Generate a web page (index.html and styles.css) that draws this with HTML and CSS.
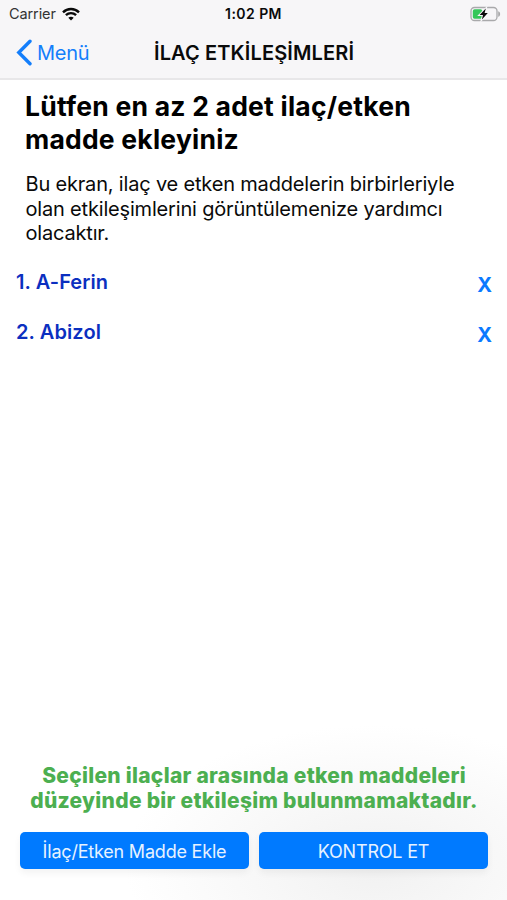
FILE: index.html
```html
<!DOCTYPE html>
<html lang="tr">
<head>
  <meta charset="UTF-8" />
  <meta name="viewport" content="width=device-width, initial-scale=1.0"/>
  <title>İlaç Etkileşimleri</title>
  <link rel="stylesheet" href="styles.css">
</head>
<body>

<div class="screen">
  <header class="top">
    <div class="status-bar">
      <div class="carrier">
        <span>Carrier</span>
        <svg class="wifi" width="18" height="14" viewBox="0 0 18 14" fill="none" stroke="#0a0a0a" stroke-width="2.4">
          <path d="M1 5.3C5.5 .9 12.5 .9 17 5.3"/>
          <path d="M3.9 8.2C6.8 5.4 11.2 5.4 14.1 8.2"/>
          <path d="M9 13.4L6.3 10.7C7.8 9.3 10.2 9.3 11.7 10.7Z" fill="#0a0a0a" stroke="none"/>
        </svg>
      </div>
      <div class="time">1:02 PM</div>
      <svg class="battery" width="31" height="16" viewBox="0 0 31 16">
        <rect x="1" y="1.5" width="26" height="13" rx="3.5" fill="none" stroke="#a9a9ab" stroke-width="1.3"/>
        <path d="M28.2 5.2C30.8 6 30.8 10 28.2 10.8Z" fill="#a9a9ab"/>
        <rect x="2.8" y="3.3" width="9.5" height="9.4" rx="1.8" fill="#35c759"/>
        <path d="M15.8 2.6L9.6 8.9H13L11.9 13.4L17.8 7.1H14.6Z" fill="#0a0a0a" stroke="#f7f6f8" stroke-width="2" paint-order="stroke"/>
      </svg>
    </div>
    <nav class="nav-bar">
      <a class="back">
        <svg width="16" height="27" viewBox="0 0 16 27" fill="none" stroke="#147efb" stroke-width="3.4" stroke-linecap="round">
          <path d="M14 2.2L2.8 13.5L14 24.8"/>
        </svg>
        <span>Menü</span>
      </a>
      <h1>İLAÇ ETKİLEŞİMLERİ</h1>
    </nav>
  </header>

  <main class="content">
    <h2>Lütfen en az 2 adet ilaç/etken<br>madde ekleyiniz</h2>
    <p class="info">Bu ekran, ilaç ve etken maddelerin birbirleriyle<br>olan etkileşimlerini görüntülemenize yardımcı<br>olacaktır.</p>
    <ul class="drugs">
      <li><span>1. A-Ferin</span><button class="remove">X</button></li>
      <li><span>2. Abizol</span><button class="remove">X</button></li>
    </ul>
  </main>

  <footer class="bottom">
    <p class="result">Seçilen ilaçlar arasında etken maddeleri<br>düzeyinde bir etkileşim bulunmamaktadır.</p>
    <div class="actions">
      <button class="btn">İlaç/Etken Madde Ekle</button>
      <button class="btn">KONTROL ET</button>
    </div>
  </footer>
</div>

</body>
</html>
```

FILE: styles.css
```css
* {
  box-sizing: border-box;
}
body {
  margin: 0;
  font-family: Inter, "Liberation Sans", sans-serif;
  background: #fff;
  color: #0a0a0a;
}
h1, h2, p, ul {
  margin: 0;
  padding: 0;
}
button {
  font-family: inherit;
  border: none;
  padding: 0;
}
.screen {
  height: 900px;
  display: flex;
  flex-direction: column;
  overflow: hidden;
}
.top {
  height: 80px;
  background: #f7f6f8;
  border-bottom: 2px solid #e8e7e9;
}
.status-bar {
  height: 27px;
  padding: 0 6px 0 9px;
  display: grid;
  grid-template-columns: 1fr auto 1fr;
  align-items: center;
  font-size: 14.5px;
}
.carrier {
  display: flex;
  align-items: center;
  gap: 6px;
  color: #333;
  letter-spacing: -0.1px;
}
.time {
  margin-right: 3px;
  font-size: 14px;
  font-weight: 600;
  letter-spacing: 0.45px;
}
.battery {
  justify-self: end;
}
.nav-bar {
  height: 51px;
  padding-left: 16px;
  display: grid;
  grid-template-columns: 138px auto;
  align-items: center;
  justify-content: start;
}
.back {
  display: flex;
  align-items: center;
  gap: 5px;
  font-size: 20px;
  letter-spacing: -0.3px;
  color: #147efb;
}
h1 {
  font-size: 20px;
  font-weight: 600;
  letter-spacing: 0.13px;
  white-space: nowrap;
}
.content {
  flex: 1;
}
h2 {
  padding: 10px 0 0 25px;
  font-size: 26.5px;
  font-weight: 700;
  line-height: 33px;
  letter-spacing: 0.22px;
  color: #000;
  white-space: nowrap;
}
.info {
  padding: 16px 0 0 25.5px;
  font-size: 20px;
  line-height: 24.5px;
  letter-spacing: -0.18px;
  white-space: nowrap;
}
.drugs {
  padding: 11px 15px 0 16px;
  list-style: none;
}
.drugs li {
  height: 50px;
  display: flex;
  align-items: center;
  justify-content: space-between;
  font-size: 20px;
  font-weight: 600;
  letter-spacing: 0.1px;
  color: #0b2fc0;
}
.remove {
  padding-top: 6px;
  background: none;
  font-size: 20px;
  font-weight: 700;
  color: #0a7aff;
}
.bottom {
  height: 200px;
  padding: 64px 19px 0 20px;
  background: radial-gradient(ellipse 250px 140px at 375px 165px, #f1f1f1, #fff);
}
.result {
  font-size: 21px;
  font-weight: 800;
  line-height: 24.5px;
  letter-spacing: 0.28px;
  text-align: center;
  white-space: nowrap;
  color: #4caf50;
}
.actions {
  display: grid;
  grid-template-columns: 1fr 1fr;
  gap: 10px;
  margin-top: 19px;
}
.btn {
  height: 37px;
  padding-top: 1px;
  border-radius: 5px;
  background: #007aff;
  color: #e6f2ff;
  font-size: 18px;
  letter-spacing: -0.2px;
  box-shadow: 0 4px 7px rgba(0, 0, 0, 0.05);
}
```
